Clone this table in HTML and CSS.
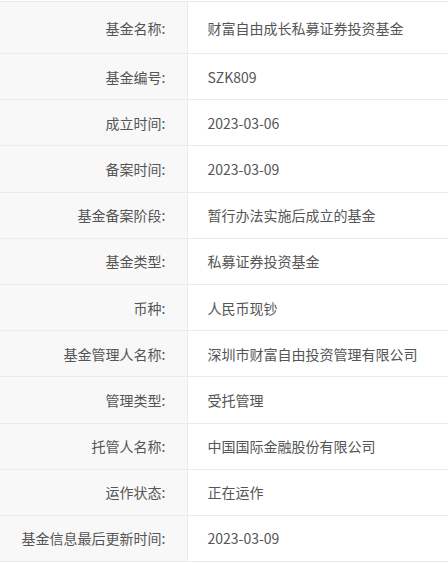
FILE: index.html
```html
<!DOCTYPE html>
<html lang="zh-CN">
<head>
    <meta charset="UTF-8">
    <meta name="viewport" content="width=device-width, initial-scale=1.0">
    <title>基金信息</title>
    <link rel="stylesheet" href="styles.css">
</head>
<body>
    <table class="info-table">
        <tbody>
            <tr class="first-row"><td class="label">基金名称:</td><td class="value">财富自由成长私募证券投资基金</td></tr>
            <tr><td class="label">基金编号:</td><td class="value">SZK809</td></tr>
            <tr><td class="label">成立时间:</td><td class="value">2023-03-06</td></tr>
            <tr><td class="label">备案时间:</td><td class="value">2023-03-09</td></tr>
            <tr><td class="label">基金备案阶段:</td><td class="value">暂行办法实施后成立的基金</td></tr>
            <tr><td class="label">基金类型:</td><td class="value">私募证券投资基金</td></tr>
            <tr><td class="label">币种:</td><td class="value">人民币现钞</td></tr>
            <tr><td class="label">基金管理人名称:</td><td class="value">深圳市财富自由投资管理有限公司</td></tr>
            <tr><td class="label">管理类型:</td><td class="value">受托管理</td></tr>
            <tr><td class="label">托管人名称:</td><td class="value">中国国际金融股份有限公司</td></tr>
            <tr><td class="label">运作状态:</td><td class="value">正在运作</td></tr>
            <tr><td class="label">基金信息最后更新时间:</td><td class="value">2023-03-09</td></tr>
        </tbody>
    </table>
</body>
</html>
```

FILE: styles.css
```css
/* General Styling */
* {
    margin: 0;
    padding: 0;
    box-sizing: border-box;
}

body {
    background-color: #ffffff;
    padding-top: 1px;
    font-family: "Noto Sans CJK SC", "Noto Sans", sans-serif;
    font-size: 14px;
    color: #555555;
}

/* Table Styling */
.info-table {
    width: 100%;
    border-collapse: collapse;
    border-top: 1px solid #ebebeb;
}

.info-table td {
    height: 46.2px;
    border-bottom: 1px solid #ebebeb;
    vertical-align: middle;
    line-height: 20px;
    white-space: nowrap;
}

.info-table .first-row td {
    height: 52px;
}

.label {
    width: 187px;
    text-align: right;
    padding-right: 21px;
    background-color: #f8f8f8;
    border-right: 1px solid #ebebeb;
}

.value {
    text-align: left;
    padding-left: 20px;
}
```
